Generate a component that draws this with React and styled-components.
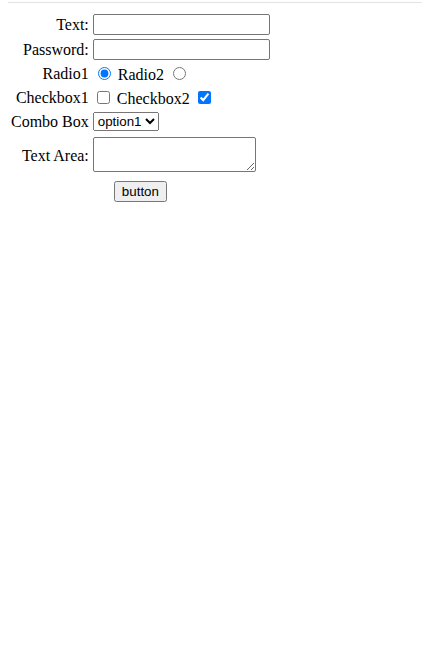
import React from "react";
import styled, { createGlobalStyle } from "styled-components";

const Global = createGlobalStyle`
  body {
    margin: 0 8px 8px;
    font-family: "Liberation Serif", "Times New Roman", serif;
    font-size: 16px;
    background: #fff;
    color: #000;
  }
`;

const TopRule = styled.div`
  margin: 2px -8px 0;
  height: 0;
  border-top: 1px solid #e3e3e3;
`;

const FormTable = styled.table`
  margin-top: 8px;
  border-spacing: 2px;
  font: inherit;
`;

const Label = styled.td`
  text-align: right;
  padding: 1px;
`;

const Field = styled.td`
  padding: 1px;
`;

const Center = styled.td`
  padding: 1px;
  padding-top: 2px;
  text-align: center;
`;

const TextInput = styled.input`
  box-sizing: border-box;
  width: 177px;
  height: 21px;
  border: 1px solid #767676;
  border-radius: 2px;
`;

const TextArea = styled.textarea`
  box-sizing: border-box;
  width: 163px;
  height: 35px;
  margin-top: 2px;
  border: 1px solid #767676;
  border-radius: 2px;
`;

const Combo = styled.select`
  font-family: "Liberation Sans", Arial, sans-serif;
  font-size: 13.33px;
  height: 19px;
`;

const Button = styled.button`
  font-family: "Liberation Sans", Arial, sans-serif;
  font-size: 13.33px;
`;

const App = () => {
  return (
    <>
      <Global />
      <TopRule />
      <FormTable>
        <tbody>
          <tr>
            <Label>Text:</Label>
            <Field><TextInput type="text" /></Field>
          </tr>
          <tr>
            <Label>Password:</Label>
            <Field><TextInput type="password" /></Field>
          </tr>
          <tr>
            <Label>Radio1</Label>
            <Field>
              <input type="radio" name="r" defaultChecked /> Radio2 <input type="radio" name="r" />
            </Field>
          </tr>
          <tr>
            <Label>Checkbox1</Label>
            <Field>
              <input type="checkbox" /> Checkbox2 <input type="checkbox" defaultChecked />
            </Field>
          </tr>
          <tr>
            <Label>Combo Box</Label>
            <Field>
              <Combo defaultValue="option1">
                <option value="option1">option1</option>
                <option value="option2">option2</option>
              </Combo>
            </Field>
          </tr>
          <tr>
            <Label>Text Area:</Label>
            <Field><TextArea /></Field>
          </tr>
          <tr>
            <Center colSpan={2}><Button type="button">button</Button></Center>
          </tr>
        </tbody>
      </FormTable>
    </>
  );
};

export default App;
